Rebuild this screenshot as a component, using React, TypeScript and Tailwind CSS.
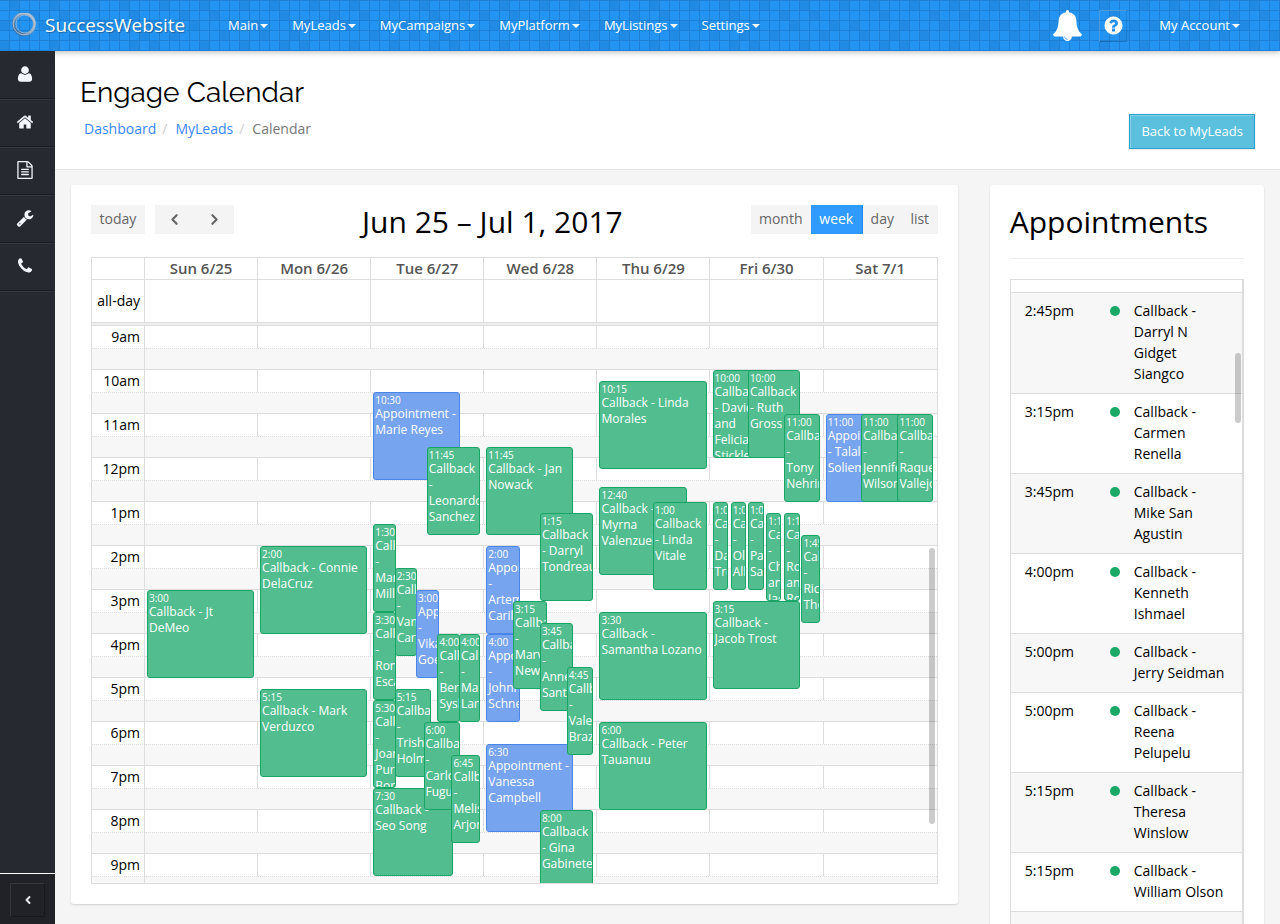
import { ChevronLeft, ChevronRight } from "lucide-react";

type CalEvent = {
  day: number;
  start: number;
  time: string;
  title: string;
  left: number;
  right: number;
  // leaves room on the right for the event stacked in front
  pad?: boolean;
  blue?: boolean;
};

const ICONS = {
  user: "M1600 1405q0 120-73 189.5t-194 69.5h-874q-121 0-194-69.5t-73-189.5q0-53 3.5-103.5t14-109 26.5-108.5 43-97.5 62-81 85.5-53.5 111.5-20q9 0 42 21.5t74.5 48 108 48 133.5 21.5 133.5-21.5 108-48 74.5-48 42-21.5q61 0 111.5 20t85.5 53.5 62 81 43 97.5 26.5 108.5 14 109 3.5 103.5zm-320-893q0 159-112.5 271.5t-271.5 112.5-271.5-112.5-112.5-271.5 112.5-271.5 271.5-112.5 271.5 112.5 112.5 271.5z",
  home: "M1472 992v480q0 26-19 45t-45 19h-384v-384h-256v384h-384q-26 0-45-19t-19-45v-480q0-1 .5-3t.5-3l575-474 575 474q1 2 1 6zm223-69l-62 74q-8 9-21 11h-3q-13 0-21-7l-692-577-692 577q-12 8-24 7-13-2-21-11l-62-74q-8-10-7-23.5t11-21.5l719-599q32-26 76-26t76 26l244 204v-195q0-14 9-23t23-9h192q14 0 23 9t9 23v408l219 182q10 8 11 21.5t-7 23.5z",
  file: "M1596 380q28 28 48 76t20 88v1152q0 40-28 68t-68 28h-1344q-40 0-68-28t-28-68v-1600q0-40 28-68t68-28h896q40 0 88 20t76 48zm-444-244v376h376q-10-29-22-41l-313-313q-12-12-41-22zm384 1528v-1024h-416q-40 0-68-28t-28-68v-416h-768v1536h1280zm-1024-864q0-14 9-23t23-9h704q14 0 23 9t9 23v64q0 14-9 23t-23 9h-704q-14 0-23-9t-9-23v-64zm736 224q14 0 23 9t9 23v64q0 14-9 23t-23 9h-704q-14 0-23-9t-9-23v-64q0-14 9-23t23-9h704zm0 256q14 0 23 9t9 23v64q0 14-9 23t-23 9h-704q-14 0-23-9t-9-23v-64q0-14 9-23t23-9h704z",
  wrench: "M448 1472q0-26-19-45t-45-19-45 19-19 45 19 45 45 19 45-19 19-45zm644-420l-682 682q-37 37-90 37-52 0-91-37l-106-108q-38-36-38-90 0-53 38-91l681-681q39 98 114.5 173.5t173.5 114.5zm634-435q0 39-23 106-47 134-164.5 217.5t-258.5 83.5q-185 0-316.5-131.5t-131.5-316.5 131.5-316.5 316.5-131.5q58 0 121.5 16.5t107.5 46.5q16 11 16 28t-16 28l-293 169v224l193 107q5-3 79-48.5t135.5-81 70.5-35.5q15 0 23.5 10t8.5 25z",
  phone: "M1600 1240q0 27-10 70.5t-21 68.5q-21 50-122 106-94 51-186 51-27 0-53-3.5t-57.5-12.5-47-14.5-55.5-20.5-49-18q-98-35-175-83-127-79-264-216t-216-264q-48-77-83-175-3-9-18-49t-20.5-55.5-14.5-47-12.5-57.5-3.5-53q0-92 51-186 56-101 106-122 25-11 68.5-21t70.5-10q14 0 21 3 18 6 53 76 11 19 30 54t35 63.5 31 53.5q3 4 17.5 25t21.5 35.5 7 28.5q0 20-28.5 50t-62 55-62 53-28.5 46q0 9 5 22.5t8.5 20.5 14 24 11.5 19q76 137 174 235t235 174q2 1 19 11.5t24 14 20.5 8.5 22.5 5q18 0 46-28.5t53-62 55-62 50-28.5q14 0 28.5 7t35.5 21.5 25 17.5q25 15 53.5 31t63.5 35 54 30q70 35 76 53 3 7 3 21z",
  bell: "M912 1696q0-16-16-16-59 0-101.5-42.5t-42.5-101.5q0-16-16-16t-16 16q0 73 51.5 124.5t124.5 51.5q16 0 16-16zm816-288q0 52-38 90t-90 38h-448q0 106-75 181t-181 75-181-75-75-181h-448q-52 0-90-38t-38-90q50-42 91-88t85-119.5 74.5-158.5 50-206 19.5-260q0-152 117-282.5t307-158.5q-8-19-8-39 0-40 28-68t68-28 68 28 28 68q0 20-8 39 190 28 307 158.5t117 282.5q0 139 19.5 260t50 206 74.5 158.5 85 119.5 91 88z",
  help: "M1024 1376v-192q0-14-9-23t-23-9h-192q-14 0-23 9t-9 23v192q0 14 9 23t23 9h192q14 0 23-9t9-23zm256-672q0-88-55.5-163t-138.5-116-170-41q-243 0-371 213-15 24 8 42l132 100q7 6 19 6 16 0 25-12 53-68 86-92 34-24 86-24 48 0 85.5 26t37.5 59q0 38-20 61t-68 45q-63 28-115.5 86.5t-52.5 125.5v36q0 14 9 23t23 9h192q14 0 23-9t9-23q0-19 21.5-49.5t54.5-49.5q32-18 49-28.5t46-35 44.5-48 28-60.5 12.5-81zm384 192q0 209-103 385.5t-279.5 279.5-385.5 103-385.5-103-279.5-279.5-103-385.5 103-385.5 279.5-279.5 385.5-103 385.5 103 279.5 279.5 103 385.5z",
};

const NAV = ["Main", "MyLeads", "MyCampaigns", "MyPlatform", "MyListings", "Settings"];

const SIDE: { label: string; icon: keyof typeof ICONS }[] = [
  { label: "Profile", icon: "user" },
  { label: "Home", icon: "home" },
  { label: "Documents", icon: "file" },
  { label: "Tools", icon: "wrench" },
  { label: "Phone", icon: "phone" },
];

const DAYS = ["Sun 6/25", "Mon 6/26", "Tue 6/27", "Wed 6/28", "Thu 6/29", "Fri 6/30", "Sat 7/1"];
const HOURS = ["9am", "10am", "11am", "12pm", "1pm", "2pm", "3pm", "4pm", "5pm", "6pm", "7pm", "8pm", "9pm"];
const FIRST_HOUR = 9;
const HOUR_HEIGHT = 44;

const EVENTS: CalEvent[] = [
  { day: 0, start: 15, time: "3:00", title: "Callback - Jt DeMeo", left: 0, right: 100 },
  { day: 1, start: 14, time: "2:00", title: "Callback - Connie DelaCruz", left: 0, right: 100 },
  { day: 1, start: 17.25, time: "5:15", title: "Callback - Mark Verduzco", left: 0, right: 100 },

  { day: 2, start: 10.5, time: "10:30", title: "Appointment - Marie Reyes", left: 0, right: 100, pad: true, blue: true },
  { day: 2, start: 11.75, time: "11:45", title: "Callback - Leonardo Sanchez", left: 50, right: 100 },
  { day: 2, start: 13.5, time: "1:30", title: "Callback - Mark Miller", left: 0, right: 40, pad: true },
  { day: 2, start: 14.5, time: "2:30", title: "Callback - Vanda Carson", left: 20, right: 60, pad: true },
  { day: 2, start: 15, time: "3:00", title: "Appointment - Vikas Goel", left: 40, right: 80, pad: true, blue: true },
  { day: 2, start: 15.5, time: "3:30", title: "Callback - Ronald Escamilla", left: 0, right: 40, pad: true },
  { day: 2, start: 16, time: "4:00", title: "Callback - Bernard Syslo", left: 60, right: 100, pad: true },
  { day: 2, start: 16, time: "4:00", title: "Callback - Maria Landry", left: 80, right: 100 },
  { day: 2, start: 17.25, time: "5:15", title: "Callback - Trisha Holmes", left: 20, right: 73, pad: true },
  { day: 2, start: 17.5, time: "5:30", title: "Callback - Joanna Purcell Borden", left: 0, right: 40, pad: true },
  { day: 2, start: 18, time: "6:00", title: "Callback - Carlos Fugua", left: 47, right: 100, pad: true },
  { day: 2, start: 18.75, time: "6:45", title: "Callback - Melissa Arjona", left: 73, right: 100 },
  { day: 2, start: 19.5, time: "7:30", title: "Callback - Seo Song", left: 0, right: 93, pad: true },

  { day: 3, start: 11.75, time: "11:45", title: "Callback - Jan Nowack", left: 0, right: 100, pad: true },
  { day: 3, start: 13.25, time: "1:15", title: "Callback - Darryl Tondreau", left: 50, right: 100 },
  { day: 3, start: 14, time: "2:00", title: "Appointment - Artemio Carillo", left: 0, right: 50, pad: true, blue: true },
  { day: 3, start: 15.25, time: "3:15", title: "Callback - Marvin Newman", left: 25, right: 75, pad: true },
  { day: 3, start: 15.75, time: "3:45", title: "Callback - Annette Santos", left: 50, right: 100, pad: true },
  { day: 3, start: 16, time: "4:00", title: "Appointment - Johnny Schneider", left: 0, right: 50, pad: true, blue: true },
  { day: 3, start: 16.75, time: "4:45", title: "Callback - Vale Braz", left: 75, right: 100 },
  { day: 3, start: 18.5, time: "6:30", title: "Appointment - Vanessa Campbell", left: 0, right: 100, pad: true, blue: true },
  { day: 3, start: 20, time: "8:00", title: "Callback - Gina Gabinete", left: 50, right: 100 },

  { day: 4, start: 10.25, time: "10:15", title: "Callback - Linda Morales", left: 0, right: 100 },
  { day: 4, start: 12 + 2 / 3, time: "12:40", title: "Callback - Myrna Valenzuela", left: 0, right: 100, pad: true },
  { day: 4, start: 13, time: "1:00", title: "Callback - Linda Vitale", left: 50, right: 100 },
  { day: 4, start: 15.5, time: "3:30", title: "Callback - Samantha Lozano", left: 0, right: 100 },
  { day: 4, start: 18, time: "6:00", title: "Callback - Peter Tauanuu", left: 0, right: 100 },

  { day: 5, start: 10, time: "10:00", title: "Callback - David and Felicia Stickler", left: 0, right: 67, pad: true },
  { day: 5, start: 10, time: "10:00", title: "Callback - Ruth Gross", left: 33, right: 100, pad: true },
  { day: 5, start: 11, time: "11:00", title: "Callback - Tony Nehring", left: 67, right: 100 },
  { day: 5, start: 13, time: "1:00", title: "Callback - Dan Trent", left: 0, right: 33, pad: true },
  { day: 5, start: 13, time: "1:00", title: "Callback - Olga Allen", left: 17, right: 50, pad: true },
  { day: 5, start: 13, time: "1:00", title: "Callback - Paul Sanders", left: 33, right: 67, pad: true },
  { day: 5, start: 13.25, time: "1:15", title: "Callback - Chris and Jacqui", left: 50, right: 83, pad: true },
  { day: 5, start: 13.25, time: "1:15", title: "Callback - Robert and Rose", left: 67, right: 100, pad: true },
  { day: 5, start: 13.75, time: "1:45", title: "Callback - Rick Theo", left: 83, right: 100 },
  { day: 5, start: 15.25, time: "3:15", title: "Callback - Jacob Trost", left: 0, right: 100, pad: true },

  { day: 6, start: 11, time: "11:00", title: "Appointment - Talal Solieman", left: 0, right: 67, pad: true, blue: true },
  { day: 6, start: 11, time: "11:00", title: "Callback - Jennifer Wilson", left: 33, right: 100, pad: true },
  { day: 6, start: 11, time: "11:00", title: "Callback - Raquel Vallejo", left: 67, right: 100 },
];

const APPOINTMENTS = [
  { time: "2:45pm", title: "Callback - Darryl N Gidget Siangco" },
  { time: "3:15pm", title: "Callback - Carmen Renella" },
  { time: "3:45pm", title: "Callback - Mike San Agustin" },
  { time: "4:00pm", title: "Callback - Kenneth Ishmael" },
  { time: "5:00pm", title: "Callback - Jerry Seidman" },
  { time: "5:00pm", title: "Callback - Reena Pelupelu" },
  { time: "5:15pm", title: "Callback - Theresa Winslow" },
  { time: "5:15pm", title: "Callback - William Olson" },
];

// darker squares of the header pattern, as [column, row]
const DARK_TILES = [
  [1, 0], [5, 0], [9, 0], [12, 0], [3, 1], [6, 1], [13, 1], [0, 2], [4, 2], [8, 2], [10, 2],
  [2, 3], [7, 3], [11, 3], [14, 3], [0, 4], [5, 4], [9, 4], [13, 4],
];

function Icon({ name, className }: { name: keyof typeof ICONS; className?: string }) {
  return (
    <svg viewBox="0 0 1792 1792" fill="currentColor" aria-hidden="true" className={className}>
      <path d={ICONS[name]} />
    </svg>
  );
}

function Caret() {
  return <span className="ml-0.5 border-x-4 border-t-4 border-x-transparent border-t-white" />;
}

function HeaderPattern() {
  return (
    <svg className="absolute inset-0 -z-10 h-full w-full" aria-hidden="true">
      <defs>
        <pattern id="tiles" width="150" height="50" patternUnits="userSpaceOnUse">
          <rect width="150" height="50" fill="#2494f2" />
          {DARK_TILES.map(([c, r]) => (
            <rect key={`${c}-${r}`} x={c * 10} y={r * 10} width="10" height="10" fill="#208ae4" />
          ))}
          {Array.from({ length: 15 }, (_, i) => (
            <rect key={i} x={i * 10 + 9} width="1" height="50" fill="#1d80d5" />
          ))}
          {Array.from({ length: 5 }, (_, i) => (
            <rect key={i} y={i * 10} width="150" height="1" fill="#1d80d5" />
          ))}
        </pattern>
      </defs>
      <rect width="100%" height="100%" fill="url(#tiles)" />
    </svg>
  );
}

function Header() {
  return (
    <header className="relative isolate z-20 flex h-[51px] shrink-0 items-center text-[13px] text-white shadow-[0_1px_6px_rgba(0,0,0,0.3)]">
      <HeaderPattern />
      <a href="#" className="flex w-[216px] items-center gap-2 pl-[11px] text-[19px] [text-shadow:1px_1px_1px_rgba(0,0,0,0.3)]">
        <svg viewBox="0 0 26 26" className="h-[26px] w-[26px]" aria-hidden="true">
          <defs>
            <linearGradient id="ring" x1="0" y1="1" x2="1" y2="0">
              <stop offset="0" stopColor="#2f5f94" />
              <stop offset="0.5" stopColor="#7f9cba" />
              <stop offset="1" stopColor="#a9bbcd" />
            </linearGradient>
          </defs>
          <circle cx="13" cy="11" r="10.5" fill="none" stroke="url(#ring)" strokeWidth="3" />
          <circle cx="13" cy="11" r="10.8" fill="none" stroke="#c3d3e2" strokeWidth="0.7" />
          <circle cx="14" cy="11" r="9" fill="none" stroke="#a9bfd6" strokeWidth="0.7" />
        </svg>
        SuccessWebsite
      </a>
      <nav className="flex flex-1">
        {NAV.map((item) => (
          <a key={item} href="#" className="flex items-center px-3">
            {item}
            <Caret />
          </a>
        ))}
      </nav>
      <button aria-label="Notifications" className="mr-4">
        <Icon name="bell" className="h-[31px] w-[31px]" />
      </button>
      <button aria-label="Help" className="mr-8 flex h-8 w-7 items-center justify-center border border-t-white/20 border-r-black/10 border-b-black/20 border-l-white/20">
        <Icon name="help" className="h-[21px] w-[21px]" />
      </button>
      <a href="#" className="mr-10 flex items-center">
        My Account
        <Caret />
      </a>
    </header>
  );
}

function Sidebar() {
  return (
    <aside className="z-30 flex w-[55px] shrink-0 flex-col justify-between bg-[#262930]">
      <nav>
        {SIDE.map((s) => (
          <a
            key={s.label}
            href="#"
            aria-label={s.label}
            className="flex h-12 items-center justify-center border-b border-b-[#1a1c20] pr-[5px] pb-px text-[#f3f6fc] shadow-[0_1px_0_#34373e]"
          >
            <Icon name={s.icon} className="h-[18px] w-[18px]" />
          </a>
        ))}
      </nav>
      <div className="flex h-[51px] justify-center border-t border-white bg-[#202227] pt-[9px]">
        <button
          aria-label="Collapse sidebar"
          className="flex h-[34px] w-[35px] items-center justify-center border border-t-[#34363b] border-r-[#17181b] border-b-[#17181b] border-l-[#34363b] text-[#e6eaf0]"
        >
          <ChevronLeft size={12} strokeWidth={4} />
        </button>
      </div>
    </aside>
  );
}

function EventBlock({ event }: { event: CalEvent }) {
  const color = event.blue ? "border-[#4a86e8] bg-[#77a4ee]" : "border-[#18a566] bg-[#52bd8e]";
  return (
    <a
      href="#"
      className={`absolute overflow-hidden rounded-[3px] border p-px text-xs leading-4 text-white ${color}`}
      style={{
        top: (event.start - FIRST_HOUR) * HOUR_HEIGHT,
        height: HOUR_HEIGHT * 2,
        left: `${event.left}%`,
        right: `calc(${100 - event.right}% + ${event.pad ? 20 : 0}px)`,
        zIndex: event.left,
      }}
    >
      <div className="whitespace-nowrap text-[10px] leading-3">{event.time}</div>
      <div>{event.title}</div>
    </a>
  );
}

function Calendar() {
  return (
    <section className="rounded-[3px] bg-white p-5 shadow-[0_1px_2px_rgba(0,0,0,0.15)]">
      <div className="flex h-[52px] items-start justify-between">
        <div className="flex h-[29px] gap-[10px] text-sm leading-[27px] text-[#666]">
          <button className="w-[54px] bg-[#f4f4f4] pb-0.5">today</button>
          <div className="flex bg-[#f4f4f4]">
            <button aria-label="Previous week" className="flex w-[39px] items-center justify-center">
              <ChevronLeft size={17} strokeWidth={3} />
            </button>
            <button aria-label="Next week" className="flex w-10 items-center justify-center">
              <ChevronRight size={17} strokeWidth={3} />
            </button>
          </div>
        </div>
        <h2 className="text-3xl leading-[33px] text-black">Jun 25 – Jul 1, 2017</h2>
        <div className="flex h-[29px] bg-[#f4f4f4] text-sm leading-[27px] text-[#666]">
          <button className="w-[60px] pb-0.5">month</button>
          <button className="w-[52px] border-r border-[#2388ea] bg-[#2f9bff] pb-0.5 text-white">week</button>
          <button className="w-[39px] pb-0.5">day</button>
          <button className="w-9 pb-0.5">list</button>
        </div>
      </div>

      <div className="border border-[#ddd]">
        <table className="w-full table-fixed border-separate border-spacing-0 text-sm text-black">
          <thead>
            <tr className="h-[22px] text-[15px] leading-[21px]">
              <th className="w-[53px] border-r border-b border-[#ddd] p-0" />
              {DAYS.map((d) => (
                <th key={d} className="border-r border-b border-[#ddd] p-0 font-semibold text-[#555] last:border-r-0">
                  {d}
                </th>
              ))}
            </tr>
          </thead>
          <tbody>
            <tr className="h-[42px]">
              <td className="border-r border-[#ddd] p-0 pr-1 text-right">all-day</td>
              {DAYS.map((d) => (
                <td key={d} className="border-r border-[#ddd] p-0 last:border-r-0" />
              ))}
            </tr>
          </tbody>
        </table>
        <div className="h-1 border-y border-[#ddd] bg-[#eee]" />

        <div className="relative h-[557px] overflow-hidden">
          <table className="w-full table-fixed border-separate border-spacing-0 text-sm text-black">
            {HOURS.map((h) => (
              <tbody key={h}>
                <tr className="h-[22px] leading-[22px]">
                  <td className="w-[53px] border-r border-[#ddd] p-0 pr-1 text-right">{h}</td>
                  {DAYS.map((d) => (
                    <td key={d} className="border-r border-[#ddd] p-0 last:border-r-0" />
                  ))}
                </tr>
                <tr className="h-[22px] bg-[#f7f7f7]">
                  <td className="border-t border-r border-b border-[#ddd] p-0 [border-top-style:dotted]" />
                  <td colSpan={7} className="border-t border-b border-[#ddd] p-0 [border-top-style:dotted]" />
                </tr>
              </tbody>
            ))}
          </table>
          <div className="absolute inset-y-0 right-0 left-[53px] flex">
            {DAYS.map((d, i) => (
              <div key={d} className="relative isolate mr-1 ml-0.5 flex-1">
                {EVENTS.filter((e) => e.day === i).map((e) => (
                  <EventBlock key={e.title} event={e} />
                ))}
              </div>
            ))}
          </div>
          <div className="absolute top-[222px] right-0.5 h-[276px] w-1.5 rounded-full bg-black/20" />
        </div>
      </div>
    </section>
  );
}

function Appointments() {
  return (
    <section className="rounded-[3px] bg-white p-5 text-black shadow-[0_1px_2px_rgba(0,0,0,0.15)]">
      <h2 className="mb-5 h-[54px] border-b border-[#eee] text-3xl leading-[33px]">Appointments</h2>
      <div className="relative border border-r-2 border-[#ddd] pt-3">
        <table className="w-full table-fixed border-separate border-spacing-0 text-sm leading-[21px]">
          <tbody>
            {APPOINTMENTS.map((a) => (
              <tr key={a.title} className="align-top odd:bg-[#f7f7f7]">
                <td className="w-[85px] border-t border-[#ddd] pt-[7px] pb-[9px] pl-[14px]">{a.time}</td>
                <td className="w-6 border-t border-[#ddd] pt-[7px] pb-[9px] pl-[14px]">
                  <span className="mt-[6px] block h-2.5 w-2.5 rounded-full bg-[#19a866]" />
                </td>
                <td className="border-t border-[#ddd] px-[14px] pt-[7px] pb-[9px]">{a.title}</td>
              </tr>
            ))}
            <tr className="h-20 odd:bg-[#f7f7f7]">
              <td colSpan={3} className="border-t border-[#ddd]" />
            </tr>
          </tbody>
        </table>
        <div className="absolute top-[73px] right-px h-[70px] w-1.5 rounded-full bg-black/20" />
      </div>
    </section>
  );
}

export default function App() {
  return (
    <div className="flex h-screen flex-col overflow-hidden bg-[#f5f5f5] font-['Open_Sans','Noto_Sans',sans-serif]">
      <Header />
      <div className="flex min-h-0 flex-1">
        <Sidebar />
        <main className="min-w-0 flex-1 overflow-hidden">
          <div className="flex h-[119px] items-start justify-between border-b border-[#e5e5e5] bg-white pr-[25px] pl-[25px]">
            <div>
              <h1 className="mt-[21px] font-['Raleway','Lato',sans-serif] text-[28px] leading-[42px] text-black">Engage Calendar</h1>
              <nav aria-label="Breadcrumb" className="mt-1 flex pl-1 text-sm leading-[21px] text-[#777]">
                <a href="#" className="text-[#3a87fd]">Dashboard</a>
                <span className="pr-2 pl-[6px] text-[#ccc]">/</span>
                <a href="#" className="text-[#3a87fd]">MyLeads</a>
                <span className="pr-2 pl-[6px] text-[#ccc]">/</span>
                <span>Calendar</span>
              </nav>
            </div>
            <a
              href="#"
              className="mt-[63px] border border-[#2a9fc9] bg-[#5bc0de] px-[11px] text-[13px] leading-[33px] text-white shadow-[inset_1px_1px_0_rgba(255,255,255,0.25),0_1px_2px_rgba(0,0,0,0.1)]"
            >
              Back to MyLeads
            </a>
          </div>
          <div className="flex items-start pt-[15px]">
            <div className="w-3/4 px-4">
              <Calendar />
            </div>
            <div className="w-1/4 px-4">
              <Appointments />
            </div>
          </div>
        </main>
      </div>
    </div>
  );
}
